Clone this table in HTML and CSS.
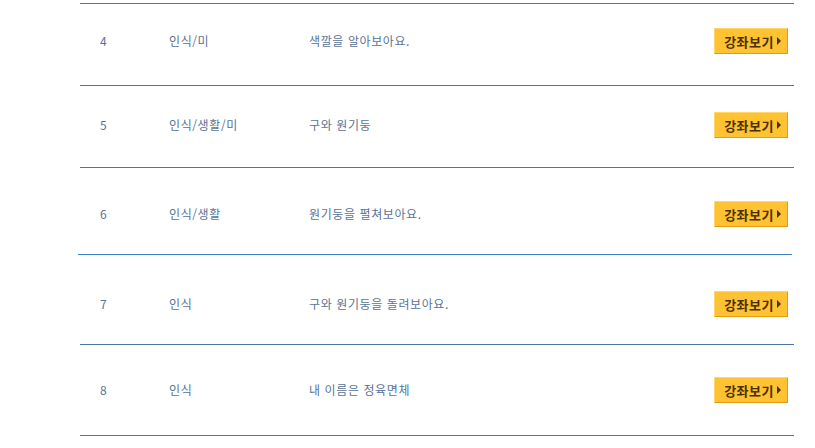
FILE: index.html
```html
<!DOCTYPE html>
<html lang="ko">
<head>
<meta charset="utf-8">
<title>강좌 목록</title>
<link rel="stylesheet" href="styles.css">
</head>
<body>
<div class="list">
  <div class="rule"></div>
  <div class="row row-a">
    <span class="num">4</span><span class="cat">인식/미</span><span class="title">색깔을 알아보아요.</span>
    <a class="btn" href="#">강좌보기<i class="tri"></i></a>
  </div>
  <div class="rule"></div>
  <div class="row row-b">
    <span class="num">5</span><span class="cat">인식/생활/미</span><span class="title">구와 원기둥</span>
    <a class="btn" href="#">강좌보기<i class="tri"></i></a>
  </div>
  <div class="rule"></div>
  <div class="row row-c">
    <span class="num">6</span><span class="cat">인식/생활</span><span class="title">원기둥을 펼쳐보아요.</span>
    <a class="btn" href="#">강좌보기<i class="tri"></i></a>
  </div>
  <div class="rule rule-shift"></div>
  <div class="row row-d">
    <span class="num">7</span><span class="cat">인식</span><span class="title">구와 원기둥을 돌려보아요.</span>
    <a class="btn" href="#">강좌보기<i class="tri"></i></a>
  </div>
  <div class="rule"></div>
  <div class="row row-e">
    <span class="num">8</span><span class="cat">인식</span><span class="title">내 이름은 정육면체</span>
    <a class="btn" href="#">강좌보기<i class="tri"></i></a>
  </div>
  <div class="rule"></div>
</div>
</body>
</html>
```
FILE: styles.css
```css
html, body {
  margin: 0;
  padding: 0;
  background: #ffffff;
}
body {
  font-family: "Noto Sans CJK KR", "Noto Sans", sans-serif;
  font-size: 12px;
  color: #5a7396;
}
.list {
  width: 714px;
  margin: 3px 0 0 80px;
  display: flex;
  flex-direction: column;
}
.rule {
  height: 1px;
  background: #4a76a8;
}
.rule-shift {
  margin-left: -2px;
  margin-right: 2px;
  background: #3f7fc4;
}
.row {
  display: flex;
  align-items: center;
  box-sizing: border-box;
  padding-left: 20px;
  padding-right: 6px;
}
.row-a { height: 81px; padding-bottom: 7px; }
.row-b { height: 81px; padding-bottom: 3px; }
.row-c { height: 86px; padding-top: 6px; }
.row-d { height: 89px; padding-top: 9px; }
.row-e { height: 90px; }
.num {
  width: 69px;
  line-height: 16px;
}
.cat {
  width: 140px;
  line-height: 16px;
  letter-spacing: 0.6px;
}
.title {
  flex: 1;
  line-height: 16px;
  letter-spacing: 0.6px;
}
.btn {
  width: 74px;
  height: 26px;
  box-sizing: border-box;
  display: flex;
  align-items: center;
  justify-content: flex-end;
  padding-right: 6px;
  gap: 3px;
  background: #ffc232;
  border: 1px solid #e39c12;
  border-top-color: #ffd66a;
  border-left-color: #ffd66a;
  color: #4a2f00;
  font-weight: bold;
  font-size: 13px;
  text-decoration: none;
  letter-spacing: 0.5px;
}
.tri {
  width: 0;
  height: 0;
  border-top: 4px solid transparent;
  border-bottom: 4px solid transparent;
  border-left: 4px solid #4a2f00;
}
```
